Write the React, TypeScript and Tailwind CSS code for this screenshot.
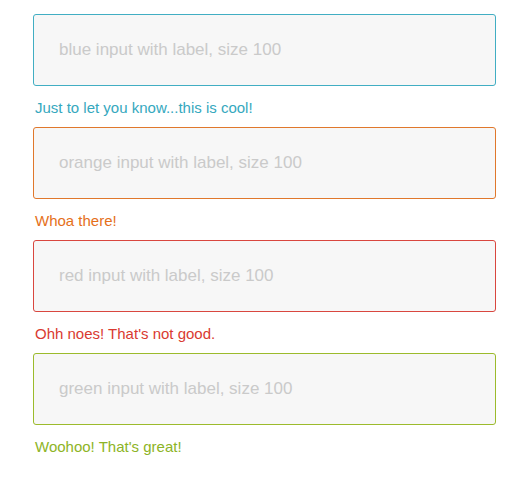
import React from "react";

const items = [
  { name: "blue", border: "border-[#41aec3]", text: "text-[#35a8be]", label: "Just to let you know...this is cool!" },
  { name: "orange", border: "border-[#e0782c]", text: "text-[#e5701a]", label: "Whoa there!" },
  { name: "red", border: "border-[#d9473f]", text: "text-[#d93a31]", label: "Ohh noes! That's not good." },
  { name: "green", border: "border-[#9cbb2c]", text: "text-[#8db426]", label: "Woohoo! That's great!" },
];

export default function App() {
  return (
    <div className="min-h-[479px] w-[513px] bg-white pl-[33px] pt-[14px] font-['Liberation_Sans',Arial,sans-serif]">
      {items.map((it) => (
        <div key={it.name} className="w-[463px]">
          <input
            className={`block h-[72px] w-full rounded-[3px] border ${it.border} bg-[#f7f7f7] px-[25px] text-[17px] text-[#555] outline-none placeholder:text-[#cacaca]`}
            placeholder={`${it.name} input with label, size 100`}
          />
          <div className={`mt-[12px] mb-[9px] pl-[2px] text-[15px] leading-[20px] ${it.text}`}>{it.label}</div>
        </div>
      ))}
    </div>
  );
}
